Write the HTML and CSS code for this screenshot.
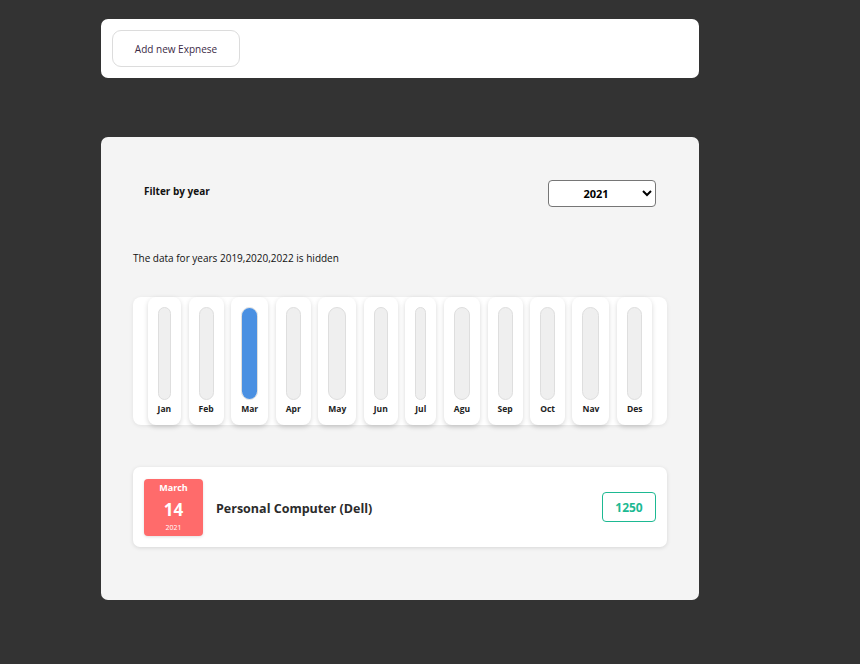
FILE: index.html
```html
<!DOCTYPE html>
<html lang="en">
<head>
<meta charset="utf-8">
<title>Expenses</title>
<link rel="stylesheet" href="styles.css">
</head>
<body>
<div class="page">
  <section class="card new-expense">
    <button class="btn-add" type="button">Add new Expnese</button>
  </section>

  <section class="card expenses">
    <div class="filter">
      <label class="filter-label" for="year">Filter by year</label>
      <select id="year" class="filter-select">
        <option>2019</option>
        <option>2020</option>
        <option selected>2021</option>
        <option>2022</option>
      </select>
    </div>

    <p class="hidden-note">The data for years 2019,2020,2022 is hidden</p>

    <div class="chart">
      <div class="bar"><div class="bar-inner"><div class="bar-fill" style="height:0%"></div></div><span class="bar-label">Jan</span></div>
      <div class="bar"><div class="bar-inner"><div class="bar-fill" style="height:0%"></div></div><span class="bar-label">Feb</span></div>
      <div class="bar"><div class="bar-inner"><div class="bar-fill" style="height:100%"></div></div><span class="bar-label">Mar</span></div>
      <div class="bar"><div class="bar-inner"><div class="bar-fill" style="height:0%"></div></div><span class="bar-label">Apr</span></div>
      <div class="bar"><div class="bar-inner"><div class="bar-fill" style="height:0%"></div></div><span class="bar-label">May</span></div>
      <div class="bar"><div class="bar-inner"><div class="bar-fill" style="height:0%"></div></div><span class="bar-label">Jun</span></div>
      <div class="bar"><div class="bar-inner"><div class="bar-fill" style="height:0%"></div></div><span class="bar-label">Jul</span></div>
      <div class="bar"><div class="bar-inner"><div class="bar-fill" style="height:0%"></div></div><span class="bar-label">Agu</span></div>
      <div class="bar"><div class="bar-inner"><div class="bar-fill" style="height:0%"></div></div><span class="bar-label">Sep</span></div>
      <div class="bar"><div class="bar-inner"><div class="bar-fill" style="height:0%"></div></div><span class="bar-label">Oct</span></div>
      <div class="bar"><div class="bar-inner"><div class="bar-fill" style="height:0%"></div></div><span class="bar-label">Nav</span></div>
      <div class="bar"><div class="bar-inner"><div class="bar-fill" style="height:0%"></div></div><span class="bar-label">Des</span></div>
    </div>

    <ul class="expense-list">
      <li class="expense-item">
        <div class="expense-date">
          <span class="date-month">March</span>
          <span class="date-day">14</span>
          <span class="date-year">2021</span>
        </div>
        <h2 class="expense-title">Personal Computer (Dell)</h2>
        <div class="expense-price">1250</div>
      </li>
    </ul>
  </section>
</div>
</body>
</html>
```

FILE: styles.css
```css
* { box-sizing: border-box; }

html, body {
  margin: 0;
  background: #333333;
  font-family: "Open Sans", "Noto Sans", "DejaVu Sans", sans-serif;
  color: #111;
}

.page {
  padding: 19px 0 40px 101px;
  display: flex;
  flex-direction: column;
  gap: 59px;
}

.card {
  width: 598px;
  border-radius: 7px;
}

.new-expense {
  background: #ffffff;
  padding: 11px;
}

.btn-add {
  display: block;
  height: 37px;
  width: 128px;
  border: 1px solid #dcdcdc;
  border-radius: 9px;
  background: #fff;
  font-family: inherit;
  font-size: 10px;
  color: #3b2a45;
  cursor: pointer;
}

.expenses {
  background: #f4f4f4;
  padding: 43px 32px 53px;
}

.filter {
  display: flex;
  justify-content: space-between;
  align-items: center;
  padding: 0 11px;
  height: 27px;
}

.filter-label {
  font-size: 10px;
  font-weight: 700;
  color: #111;
  margin-top: -6px;
}

.filter-select {
  width: 108px;
  height: 27px;
  border: 1px solid #767676;
  border-radius: 4px;
  background: #fff;
  font-family: inherit;
  font-size: 11px;
  font-weight: 700;
  color: #000;
  text-align: center;
  text-align-last: center;
  padding: 0 6px;
}

.hidden-note {
  margin: 44px 0 0;
  font-size: 10px;
  line-height: 14px;
  color: #111;
}

.chart {
  margin-top: 32px;
  height: 128px;
  background: #fff;
  border-radius: 8px;
  box-shadow: 0 1px 4px rgba(0, 0, 0, 0.08);
  display: flex;
  justify-content: center;
  gap: 7.5px;
}

.bar {
  background: #fff;
  border-radius: 8px;
  box-shadow: 0 2px 5px rgba(0, 0, 0, 0.16);
  padding: 10px 10px 0;
  display: flex;
  flex-direction: column;
  align-items: stretch;
}

.bar-inner {
  height: 93px;
  border: 1px solid #dedede;
  background: #efefef;
  border-radius: 10px;
  overflow: hidden;
  display: flex;
  flex-direction: column;
  justify-content: flex-end;
}

.bar-fill {
  background: #4a90e2;
  width: 100%;
}

.bar-label {
  font-size: 8.5px;
  font-weight: 700;
  color: #222;
  text-align: center;
  margin-top: 3px;
  line-height: 12px;
}

.expense-list {
  list-style: none;
  margin: 42px 0 0;
  padding: 0;
}

.expense-item {
  background: #fff;
  border-radius: 7px;
  box-shadow: 0 1px 4px rgba(0, 0, 0, 0.12);
  height: 80px;
  padding: 0 11px;
  display: flex;
  align-items: center;
}

.expense-date {
  width: 59px;
  height: 57px;
  background: #ff6b6b;
  border-radius: 4px;
  box-shadow: 0 1px 3px rgba(0, 0, 0, 0.12);
  color: #fff;
  display: flex;
  flex-direction: column;
  align-items: center;
  padding-top: 2px;
}

.date-month {
  font-size: 9px;
  font-weight: 700;
  line-height: 13px;
}

.date-day {
  font-size: 17px;
  font-weight: 700;
  line-height: 22px;
  margin-top: 5px;
}

.date-year {
  font-size: 7px;
  line-height: 10px;
  margin-top: 2px;
}

.expense-title {
  flex: 1;
  margin: 2px 0 0 13px;
  font-size: 12.5px;
  font-weight: 700;
  color: #2b2b2b;
}

.expense-price {
  width: 54px;
  height: 30px;
  border: 1px solid #1db992;
  border-radius: 4px;
  color: #1db992;
  font-size: 12px;
  font-weight: 700;
  display: flex;
  align-items: center;
  justify-content: center;
}
```
